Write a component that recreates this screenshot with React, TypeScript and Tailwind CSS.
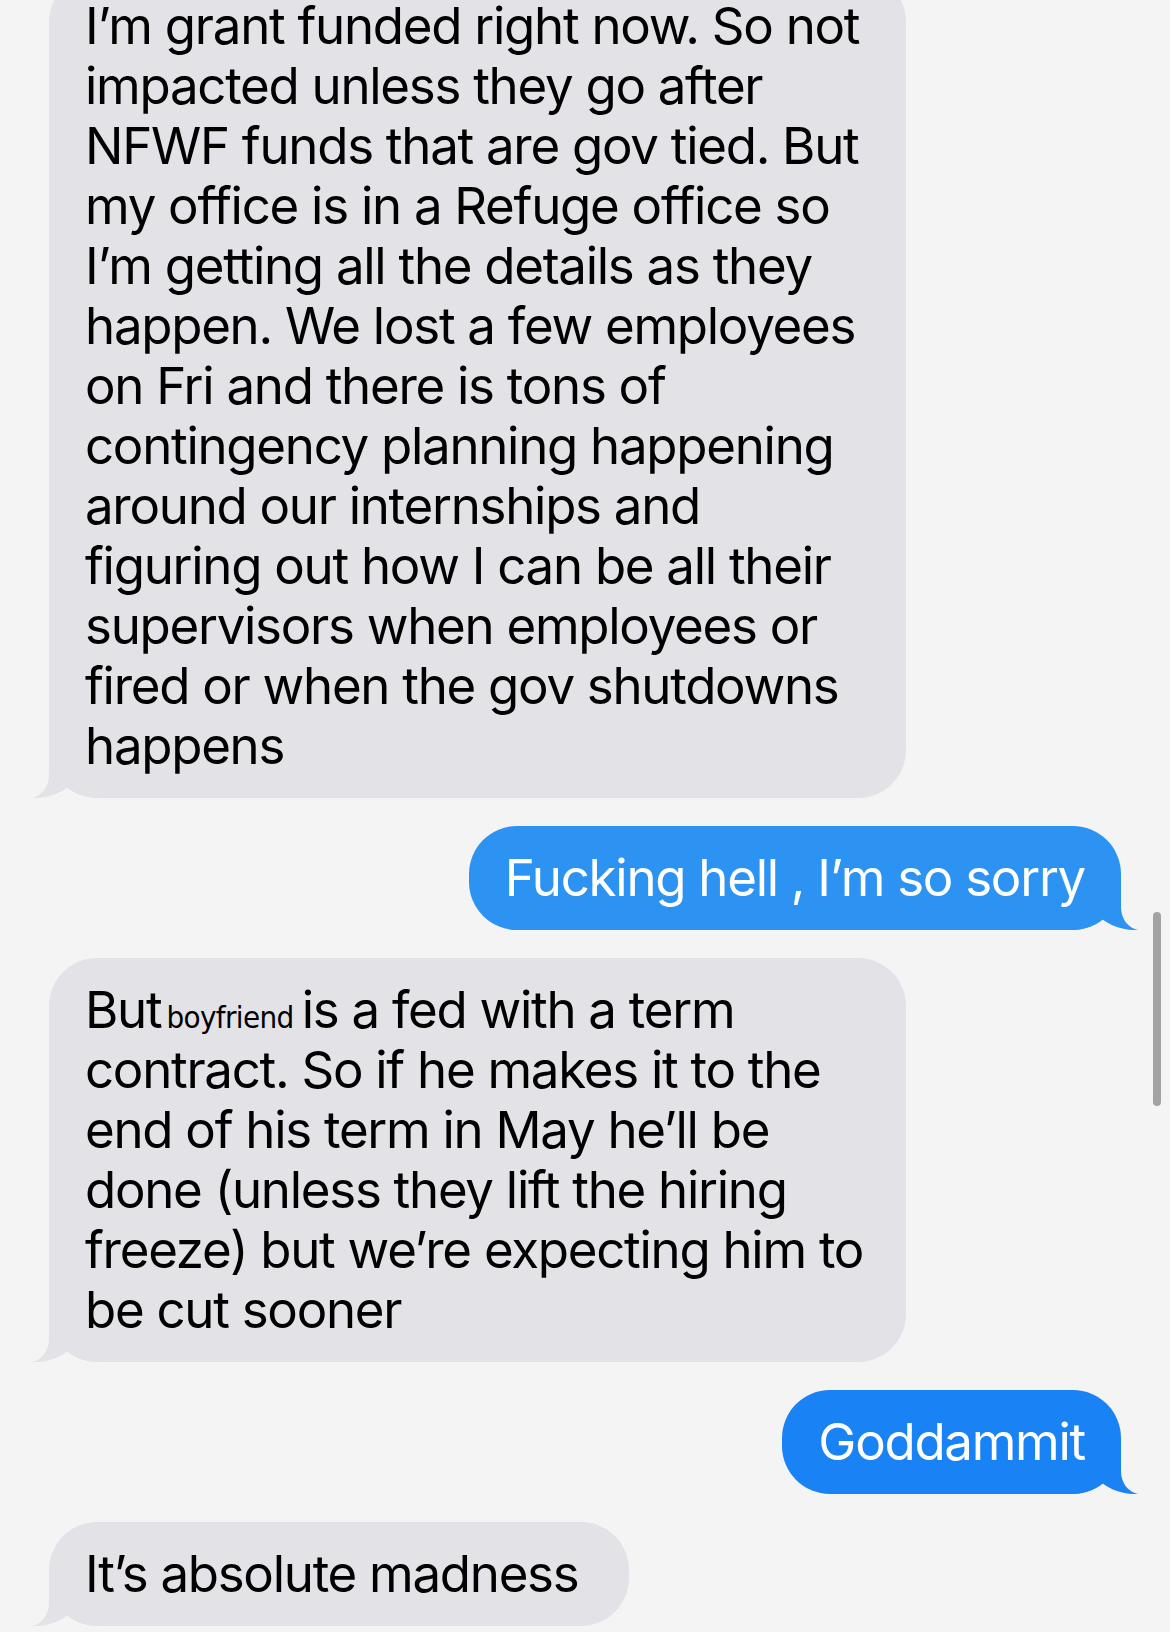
import React from "react";

const firstLines = [
  "I’m grant funded right now. So not",
  "impacted unless they go after",
  "NFWF funds that are gov tied. But",
  "my office is in a Refuge office so",
  "I’m getting all the details as they",
  "happen. We lost a few employees",
  "on Fri and there is tons of",
  "contingency planning happening",
  "around our internships and",
  "figuring out how I can be all their",
  "supervisors when employees or",
  "fired or when the gov shutdowns",
  "happens",
];

const secondLines = [
  "contract. So if he makes it to the",
  "end of his term in May he’ll be",
  "done (unless they lift the hiring",
  "freeze) but we’re expecting him to",
  "be cut sooner",
];

const TAIL =
  "M17 0 L17 27 C17 40 9 48 0 50 C14 50.5 27 46 36 39 C44 46 54 50 68 50 L80 50 L80 0 Z";

const GrayTail = () => (
  <svg
    className="absolute -left-[17px] bottom-0 text-[#e2e2e7]"
    width="80"
    height="50"
    viewBox="0 0 80 50"
  >
    <path d={TAIL} fill="currentColor" />
  </svg>
);

const BlueTail = ({ color }: { color: string }) => (
  <svg
    className={`absolute -right-[17px] bottom-0 -scale-x-100 ${color}`}
    width="80"
    height="50"
    viewBox="0 0 80 50"
  >
    <path d={TAIL} fill="currentColor" />
  </svg>
);

const Received: React.FC<{ children: React.ReactNode; width: string }> = ({
  children,
  width,
}) => (
  <div
    className={`relative self-start rounded-[48px] bg-[#e2e2e7] px-[36px] py-[22px] text-black ${width}`}
  >
    <div className="relative z-10">{children}</div>
    <GrayTail />
  </div>
);

const Sent: React.FC<{ text: string; bg: string; tail: string }> = ({
  text,
  bg,
  tail,
}) => (
  <div
    className={`relative self-end rounded-[48px] px-[36px] py-[22px] text-white ${bg}`}
  >
    <div className="relative z-10 whitespace-nowrap">{text}</div>
    <BlueTail color={tail} />
  </div>
);

export default function App() {
  return (
    <div className="relative h-[1632px] w-[1170px] overflow-hidden bg-[#f4f4f4] font-['Inter','Liberation_Sans',sans-serif] text-[51px] leading-[60px] tracking-[-0.025em]">
      <div className="-mt-[26px] flex flex-col gap-[28px] px-[49px]">
        <Received width="w-[857px]">
          {firstLines.map((l) => (
            <div key={l} className="whitespace-nowrap">
              {l}
            </div>
          ))}
        </Received>

        <Sent
          text="Fucking hell , I’m so sorry"
          bg="bg-[#2c93f2]"
          tail="text-[#2c93f2]"
        />

        <Received width="w-[857px]">
          <div className="whitespace-nowrap">
            But
            <span className="ml-[5px] mr-[8px] font-['DejaVu_Sans_Condensed','DejaVu_Sans',sans-serif] text-[31px] leading-none tracking-[-0.02em]">
              boyfriend
            </span>
            is a fed with a term
          </div>
          {secondLines.map((l) => (
            <div key={l} className="whitespace-nowrap">
              {l}
            </div>
          ))}
        </Received>

        <Sent text="Goddammit" bg="bg-[#1983f6]" tail="text-[#1983f6]" />

        <Received width="w-[580px]">
          <div className="whitespace-nowrap">It’s absolute madness</div>
        </Received>
      </div>

      {/* scroll indicator */}
      <div className="absolute right-[9px] top-[912px] h-[194px] w-[8px] rounded-full bg-[#a3a3a3]" />
    </div>
  );
}
